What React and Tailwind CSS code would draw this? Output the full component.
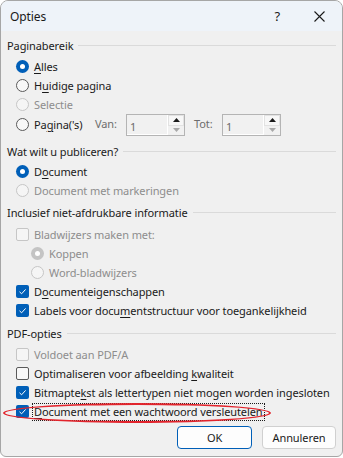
import React from 'react';

const Radio = ({ checked, disabled }) => {
  if (checked) {
    return (
      <span className={`w-[13px] h-[13px] rounded-full flex items-center justify-center shrink-0 ${disabled ? 'bg-[#c4c4c4]' : 'bg-[#005fb8]'}`}>
        <span className="w-[5px] h-[5px] rounded-full bg-white" />
      </span>
    );
  }
  return (
    <span className={`w-[13px] h-[13px] rounded-full border shrink-0 ${disabled ? 'border-[#c6c6c6] bg-[#f5f5f5]' : 'border-[#5a5a5a] bg-[#f8f8f8]'}`} />
  );
};

const Check = ({ checked, disabled }) => {
  if (checked) {
    return (
      <span className="w-[13px] h-[13px] rounded-[2px] bg-[#005fb8] flex items-center justify-center shrink-0">
        <svg width="9" height="9" viewBox="0 0 9 9" fill="none" stroke="white" strokeWidth="1">
          <path d="M1.5 4.8 L3.6 6.8 L7.6 2.4" />
        </svg>
      </span>
    );
  }
  return (
    <span className={`w-[13px] h-[13px] rounded-[2px] border shrink-0 ${disabled ? 'border-[#c6c6c6] bg-[#f5f5f5]' : 'border-[#5a5a5a] bg-[#f8f8f8]'}`} />
  );
};

const Header = ({ children, className = '' }) => (
  <div className={`flex items-center h-[19px] ${className}`}>
    <span className="text-[#1a1a1a]">{children}</span>
    <span className="flex-1 ml-[5px] h-px bg-[#dadada]" />
  </div>
);

const Row = ({ control, disabled, indent, children }) => (
  <div className={`flex items-center h-[19px] ${indent ? 'ml-[24px]' : 'ml-[9px]'}`}>
    {control}
    <span className={`ml-[5px] whitespace-nowrap ${disabled ? 'text-[#8d8d8d]' : 'text-[#1a1a1a]'}`}>{children}</span>
  </div>
);

const U = ({ children }) => <span className="underline underline-offset-[2px]">{children}</span>;

const SpinBox = () => (
  <div className="w-[59px] h-[22px] border border-[#b4b4b4] bg-[#f1f1f1] flex shrink-0">
    <div className="flex-1 pl-[3px] pt-[2px] text-[#6b6b6b] border-b border-white">1</div>
    <div className="w-[17px] flex flex-col border-l border-white">
      <div className="flex-1 flex items-center justify-center border border-[#e2e2e2] bg-[#f7f7f7]">
        <svg width="7" height="4" viewBox="0 0 7 4"><path d="M0 4 L3.5 0 L7 4 Z" fill="#1a1a1a" /></svg>
      </div>
      <div className="flex-1 flex items-center justify-center">
        <svg width="7" height="4" viewBox="0 0 7 4"><path d="M0 0 L3.5 4 L7 0 Z" fill="#a8a8a8" /></svg>
      </div>
    </div>
  </div>
);

export default function App() {
  return (
    <div className="w-[343px] h-[458px] bg-white font-['Noto_Sans',sans-serif] text-[11px] leading-[19px] tracking-[-0.1px]">
      <div className="relative w-[343px] h-[457px] border border-[#a6a6a6] rounded-t-[8px] rounded-b-[6px] overflow-hidden flex flex-col bg-[#f0f0f0]">
        <div className="h-[30px] shrink-0 bg-[#eef3f9] flex items-center pl-[9px] pr-[17px]">
          <span className="text-[#1a1a1a] text-[12px] mt-[1px]">Opties</span>
          <span className="ml-auto text-[#1a1a1a] text-[13px] mr-[34px]">?</span>
          <svg width="11" height="11" viewBox="0 0 11 11" stroke="#1a1a1a" strokeWidth="1.1">
            <path d="M0.5 0.5 L10.5 10.5 M10.5 0.5 L0.5 10.5" />
          </svg>
        </div>

        <div className="flex flex-col px-[6px] pt-[5px]">
          <Header>Paginabereik</Header>
          <div className="mt-[2px]">
            <Row control={<Radio checked />}><U>A</U>lles</Row>
            <Row control={<Radio />}>H<U>u</U>idige pagina</Row>
            <Row control={<Radio disabled />} disabled>Selectie</Row>
            <div className="flex items-center h-[21px] ml-[9px]">
              <Radio />
              <span className="ml-[5px] w-[61px] text-[#1a1a1a] whitespace-nowrap">Pa<U>g</U>ina('s)</span>
              <span className="w-[31px] text-[#6d6d6d] -mt-[2px]">Van:</span>
              <SpinBox />
              <span className="ml-[9px] w-[28px] text-[#6d6d6d] -mt-[2px]">Tot:</span>
              <SpinBox />
            </div>
          </div>

          <Header className="mt-[7px]">Wat wilt u publiceren?</Header>
          <div className="mt-[1px]">
            <Row control={<Radio checked />}>D<U>o</U>cument</Row>
            <Row control={<Radio disabled />} disabled>Document met markeringen</Row>
          </div>

          <Header className="mt-[3px]">Inclusief niet-afdrukbare informatie</Header>
          <div className="mt-[3px]">
            <Row control={<Check disabled />} disabled>Bladwijzers maken met:</Row>
            <Row indent control={<Radio checked disabled />} disabled>Koppen</Row>
            <Row indent control={<Radio disabled />} disabled>Word-bladwijzers</Row>
            <Row control={<Check checked />}>D<U>o</U>cumenteigenschappen</Row>
            <Row control={<Check checked />}>Labels voor docu<U>m</U>entstructuur voor toegankelijkheid</Row>
          </div>

          <Header className="mt-[4px]">PDF-opties</Header>
          <div className="mt-[2px]">
            <Row control={<Check disabled />} disabled>Voldoet aan PDF/A</Row>
            <Row control={<Check />}>Optimaliseren voor afbeelding <U>k</U>waliteit</Row>
            <Row control={<Check checked />}>Bitmapte<U>k</U>st als lettertypen niet mogen worden ingesloten</Row>
            <div className="flex items-center h-[19px] ml-[9px]">
              <Check checked />
              <span className="ml-[3px] border border-dotted border-[#1a1a1a] px-px leading-[16px] text-[#1a1a1a] whitespace-nowrap"><U>D</U>ocument met een wachtwoord versleutelen</span>
            </div>
          </div>

          <div className="flex justify-end gap-[10px] mt-[5px]">
            <button className="w-[75px] h-[23px] rounded-[4px] border border-[#005fb8] bg-[#fdfdfd] text-[#1a1a1a] text-[11px]">OK</button>
            <button className="w-[74px] h-[23px] rounded-[4px] border border-[#d0d0d0] bg-[#fdfdfd] text-[#1a1a1a] text-[11px]">Annuleren</button>
          </div>
        </div>

        <div className="absolute left-[2px] top-[402px] w-[268px] h-[20px] rounded-[50%] border-2 border-[#e2242c] pointer-events-none" />
      </div>
    </div>
  );
}
